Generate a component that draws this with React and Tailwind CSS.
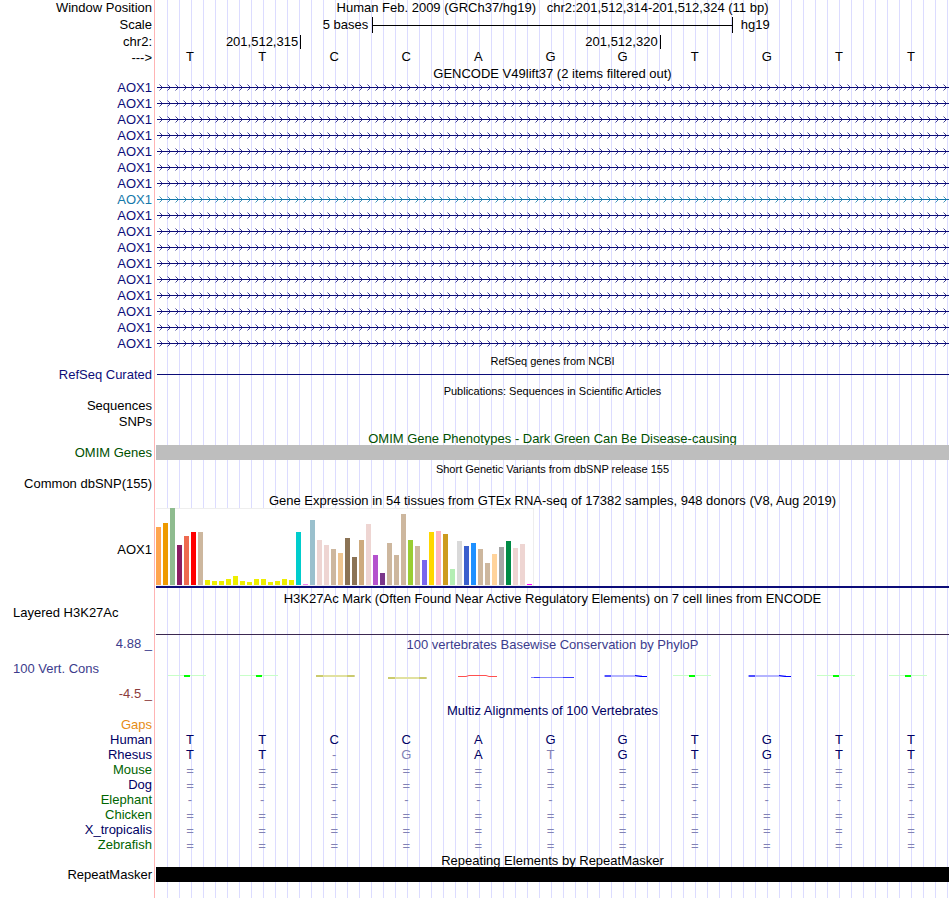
import clsx from "clsx";

const GUIDES =
  "bg-[linear-gradient(to_right,transparent_11px,#dcdcff_11px)] bg-[length:12px_100%]";

const GENCODE = Array.from({ length: 17 }, (_, i) => (i === 7 ? "teal" : "navy"));

const BASES = "TTCCAGGTGTT".split("");

const TISSUES = [
  [58, "#ffa54f"], [62, "#ee9a00"], [77, "#8fbc8f"], [40, "#8b1c62"],
  [49, "#ee6a50"], [53, "#ff0000"], [53, "#cdb79e"], [5, "#eeee00"],
  [4, "#eeee00"], [4, "#eeee00"], [6, "#eeee00"], [9, "#eeee00"],
  [4, "#eeee00"], [3, "#eeee00"], [6, "#eeee00"], [6, "#eeee00"],
  [3, "#eeee00"], [4, "#eeee00"], [6, "#eeee00"], [5, "#eeee00"],
  [53, "#00cdcd"], [1, "#ee82ee"], [65, "#9ac0cd"], [45, "#eed5d2"],
  [40, "#eed5d2"], [36, "#cdb79e"], [32, "#eec591"], [47, "#8b7355"],
  [28, "#8b7355"], [45, "#cdaa7d"], [61, "#eed5d2"], [30, "#b452cd"],
  [12, "#7a378b"], [42, "#cdb79e"], [30, "#cdb79e"], [71, "#cdb79e"],
  [45, "#9acd32"], [39, "#cdb79e"], [25, "#7a67ee"], [53, "#ffd700"],
  [54, "#ffb6c1"], [51, "#cd9b1d"], [16, "#b4eeb4"], [44, "#d9d9d9"],
  [39, "#3a5fcd"], [42, "#1e90ff"], [36, "#cdb79e"], [22, "#cdb79e"],
  [31, "#ffd39b"], [38, "#a6a6a6"], [44, "#008b45"], [37, "#eed5d2"],
  [41, "#eed5d2"], [1, "#ff00ff"],
];

const MARKS = [
  "green", "green", "olive", "oliveLow", "red", "thin",
  "blue", "green", "blue", "green", "green",
];

const SPECIES = [
  { name: "Human", color: "text-[#000064]", bases: "TTCCAGGTGTT" },
  { name: "Rhesus", color: "text-[#000064]", bases: "TT-GATGTGTT", faded: [2, 3, 5] },
  { name: "Mouse", color: "text-[#006400]", bases: "===========" },
  { name: "Dog", color: "text-[#000064]", bases: "===========" },
  { name: "Elephant", color: "text-[#006400]", bases: "-----------" },
  { name: "Chicken", color: "text-[#006400]", bases: "===========" },
  { name: "X_tropicalis", color: "text-[#000064]", bases: "===========" },
  { name: "Zebrafish", color: "text-[#006400]", bases: "===========" },
];

// One row of the browser: label on the left, data on the right
const Track = ({ label, height, labelClass, className, children }) => (
  <div className={clsx("flex", height)}>
    <div
      className={clsx(
        "flex w-[155px] shrink-0 items-center justify-end border-r border-[#ffb4b4] pr-0.5 whitespace-pre",
        labelClass
      )}
    >
      {label}
    </div>
    <div className={clsx("ml-px min-w-0 flex-1", GUIDES, className)}>{children}</div>
  </div>
);

const Title = ({ label, labelClass, height, small, color, children }) => (
  <Track
    label={label}
    labelClass={labelClass}
    height={height}
    className="flex items-center justify-center pt-0.5"
  >
    <h2 className={clsx("whitespace-pre", small && "text-[11px]", color)}>{children}</h2>
  </Track>
);

const Columns = ({ items, className }) => (
  <div className={clsx("grid h-full grid-cols-11 text-center", className)}>{items}</div>
);

const Arrows = ({ id, color }) => (
  <svg className={clsx("block h-4 w-full", color)} aria-hidden="true">
    <defs>
      <pattern id={id} width="8" height="16" patternUnits="userSpaceOnUse">
        <path d="M3.5 4.5 6.5 7.5 3.5 10.5" fill="none" stroke="currentColor" strokeWidth="0.8" />
      </pattern>
    </defs>
    <rect width="100%" height="16" fill={`url(#${id})`} />
    <rect x="1" y="7" width="100%" height="1" fill="currentColor" />
  </svg>
);

// Conservation score marks, one per base
const Mark = ({ kind }) => (
  <svg className="block h-8 w-[72px]" viewBox="0 0 72 32" aria-hidden="true">
    {kind === "green" && (
      <>
        <path d="M12 22.5h38" stroke="#c8ffc8" />
        <path d="M28 23h6" stroke="#00ff00" strokeWidth="2" />
      </>
    )}
    {kind === "olive" && (
      <>
        <path d="M16 23h38" stroke="#e1e1a0" strokeWidth="2" />
        <path d="M16 23h7M47 23h8" stroke="#b4b43c" />
      </>
    )}
    {kind === "oliveLow" && (
      <>
        <path d="M16 25h38" stroke="#e1e1a0" strokeWidth="2" />
        <path d="M16 25h7M47 25h8" stroke="#b4b43c" />
      </>
    )}
    {kind === "red" && (
      <path d="M14 23.5h8l3-1h17l3 1h8" fill="none" stroke="#ff5050" />
    )}
    {kind === "thin" && (
      <>
        <path d="M15 24.5h43" stroke="#8282ff" />
        <path d="M18 24.5h6M47 24.5h11" stroke="#3c3cff" />
      </>
    )}
    {kind === "blue" && (
      <>
        <path d="M15 23h38" stroke="#b4b4ff" strokeWidth="2" />
        <path d="M16 23h6" stroke="#5050ff" strokeWidth="2" />
        <path d="M46 22.5 52 23.5H58" fill="none" stroke="#0000ff" />
      </>
    )}
  </svg>
);

const Ruler = () => (
  <>
    <Track label="Window Position" height="h-4" className="flex items-center justify-center">
      <h1 className="whitespace-pre">
        {"Human Feb. 2009 (GRCh37/hg19)   chr2:201,512,314-201,512,324 (11 bp)"}
      </h1>
    </Track>
    <Track label="Scale" height="h-[18px]">
      <div className="grid h-full grid-cols-11 items-center">
        <span className="col-span-3 pr-1 text-right">5 bases</span>
        <div className="col-span-5 flex h-4 items-center border-x border-black">
          <div className="h-px w-full bg-black" />
        </div>
        <span className="col-span-3 pl-2">hg19</span>
      </div>
    </Track>
    <Track label="chr2:" height="h-[15px]">
      <div className="grid h-full grid-cols-11 items-center text-right leading-[14px]">
        <span className="col-span-2 pr-0.5">201,512,315</span>
        <span className="col-span-5 border-x border-black pr-0.5">201,512,320</span>
      </div>
    </Track>
    <Track label="--->" height="h-[17px]">
      <Columns
        items={BASES.map((base, i) => (
          <span key={i} className="pr-1 leading-[15px]">{base}</span>
        ))}
      />
    </Track>
  </>
);

const Gencode = () => (
  <>
    <Title height="h-[14px]">GENCODE V49lift37 (2 items filtered out)</Title>
    {GENCODE.map((tone, i) => {
      const color = tone === "teal" ? "text-[#1478aa]" : "text-[#0c0c78]";
      return (
        <Track key={i} label="AOX1" height="h-4" labelClass={color}>
          <Arrows id={`arrows-${i}`} color={color} />
        </Track>
      );
    })}
  </>
);

const Expression = () => (
  <>
    <Title height="h-4">
      Gene Expression in 54 tissues from GTEx RNA-seq of 17382 samples, 948 donors (V8, Aug 2019)
    </Title>
    <Track label="AOX1" height="h-20" labelClass="pt-1" className="flex flex-col">
      <div className="flex h-[78px] w-[378px] items-end gap-0.5 border border-l-0 border-[#eeeeee] bg-white">
        {TISSUES.map(([value, color], i) => (
          <div key={i} className="w-[5px]" style={{ height: value, backgroundColor: color }} />
        ))}
      </div>
      <div className="h-0.5 bg-[#0c0c78]" />
    </Track>
  </>
);

const Conservation = () => (
  <>
    <Title
      label="4.88 _"
      labelClass="text-[#3c3c8c]"
      height="h-[18px]"
      color="text-[#3c3c8c]"
    >
      100 vertebrates Basewise Conservation by PhyloP
    </Title>
    <Track
      label="100 Vert. Cons"
      height="h-8"
      labelClass="justify-start! pl-[13px] text-[#3c3c8c]"
    >
      <Columns items={MARKS.map((kind, i) => <Mark key={i} kind={kind} />)} />
    </Track>
    <Track label="-4.5 _" height="h-[17px]" labelClass="text-[#8c3c3c]" />
  </>
);

const Alignments = () => (
  <>
    <Title height="h-4" color="text-[#000064]">Multiz Alignments of 100 Vertebrates</Title>
    <Track label="Gaps" height="h-[14px]" labelClass="text-[#e68c14]" />
    {SPECIES.map(({ name, color, bases, faded = [] }) => (
      <Track key={name} label={name} height="h-[15px]" labelClass={color}>
        <Columns
          className="text-[#000064]"
          items={bases.split("").map((base, i) => (
            <span
              key={i}
              className={clsx(
                "pr-1",
                base === "=" ? "leading-[17px]" : "leading-[15px]",
                (faded.includes(i) || base === "=" || base === "-") && "text-[#8282b4]"
              )}
            >
              {base}
            </span>
          ))}
        />
      </Track>
    ))}
  </>
);

const App = () => {
  return (
    <main className="flex min-h-screen flex-col bg-white pr-px font-['Liberation_Sans',Arial,sans-serif] text-[13px] leading-4 text-black">
      <Ruler />
      <Gencode />

      <Title height="h-[15px]" small>RefSeq genes from NCBI</Title>
      <Track
        label="RefSeq Curated"
        height="h-[15px]"
        labelClass="text-[#0c0c78]"
        className="flex items-center pl-px"
      >
        <div className="h-px w-full bg-[#0c0c78]" />
      </Track>

      <Title height="h-4" small>Publications: Sequences in Scientific Articles</Title>
      <Track label="Sequences" height="h-4" />
      <Track label="SNPs" height="h-4" />

      <Title height="h-[15px]" color="text-[#005000]">
        OMIM Gene Phenotypes - Dark Green Can Be Disease-causing
      </Title>
      <Track label="OMIM Genes" height="h-[15px]" labelClass="text-[#005000]">
        <div className="h-full bg-[#bebebe]" />
      </Track>

      <Title height="h-4" small>Short Genetic Variants from dbSNP release 155</Title>
      <Track label="Common dbSNP(155)" height="h-4" />

      <Expression />

      <Title height="h-5">
        H3K27Ac Mark (Often Found Near Active Regulatory Elements) on 7 cell lines from ENCODE
      </Title>
      <Track
        label="Layered H3K27Ac"
        height="h-[27px]"
        labelClass="justify-start! items-start! pl-[13px] leading-[10px]"
        className="flex items-end"
      >
        <div className="h-px w-full bg-[#3c2850]" />
      </Track>

      <Conservation />
      <Alignments />

      <Title height="h-[15px]">Repeating Elements by RepeatMasker</Title>
      <Track label="RepeatMasker" height="h-[15px]">
        <div className="h-full bg-black" />
      </Track>
      <Track height="min-h-4 flex-1" />
    </main>
  );
};

export default App;
